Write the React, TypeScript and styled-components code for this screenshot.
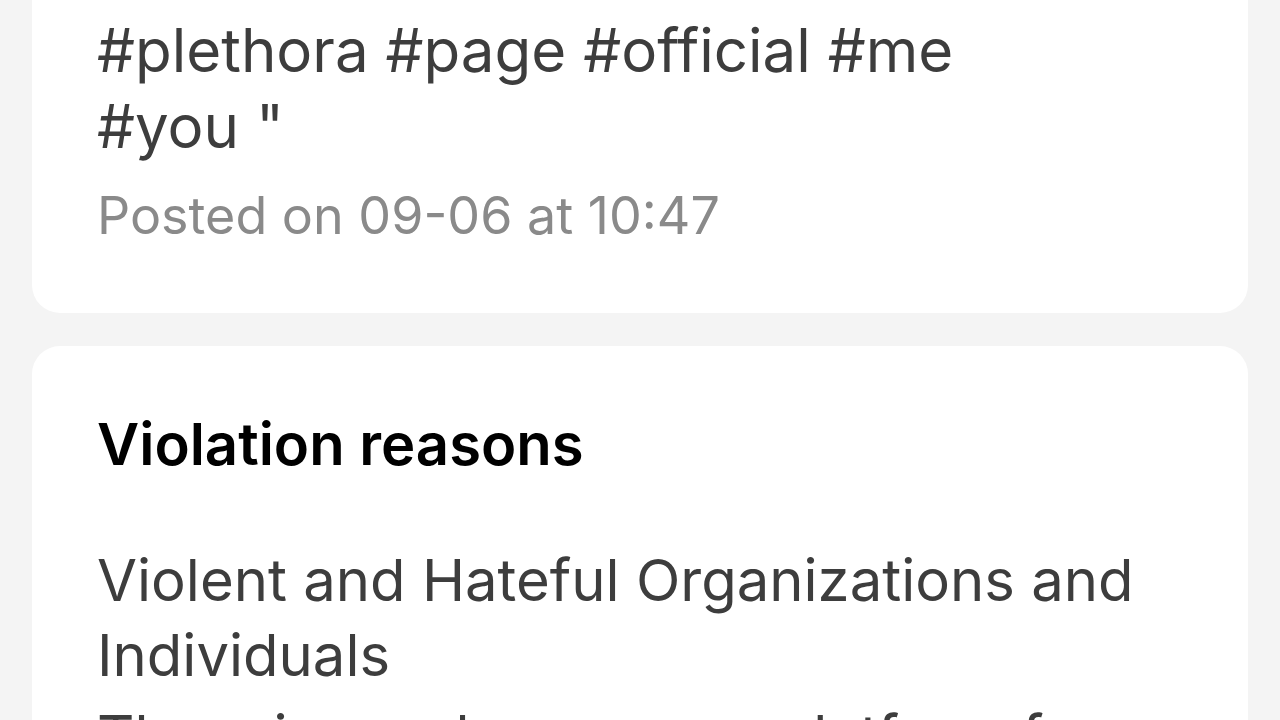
import React from 'react';
import styled, { createGlobalStyle } from 'styled-components';

const GlobalStyle = createGlobalStyle`
  html, body {
    margin: 0;
    padding: 0;
    background: #f4f4f4;
    font-family: Inter, Roboto, 'Liberation Sans', sans-serif;
    overflow: hidden;
  }
`;

const Page = styled.div`
  height: 720px;
  overflow: hidden;
  padding: 0 32px;
`;

// the view is scrolled, so the first card starts above the top edge
const Stack = styled.div`
  display: flex;
  flex-direction: column;
  gap: 33px;
  margin-top: -28px;
`;

const Card = styled.section<{ $top: number; $bottom: number }>`
  background: #fff;
  border-radius: 28px;
  padding: ${(p) => p.$top}px 65px ${(p) => p.$bottom}px;
`;

const Caption = styled.div`
  font-size: 60px;
  line-height: 76px;
  color: #3d3d3d;
`;

const Meta = styled.div`
  margin-top: 22px;
  font-size: 52px;
  line-height: 60px;
  color: #8a8a8a;
`;

const Heading = styled.div`
  font-size: 58px;
  line-height: 64px;
  font-weight: 600;
  color: #000;
`;

const Reason = styled.div`
  margin-top: 67px;
  font-size: 58px;
  line-height: 75px;
  color: #3d3d3d;
`;

const Body = styled.div`
  margin-top: 6px;
  font-size: 58px;
  line-height: 75px;
  color: #3d3d3d;
`;

export default function App() {
  return (
    <>
      <GlobalStyle />
      <Page>
        <Stack>
          <Card $top={40} $bottom={67}>
            <Caption>
              #plethora #page #official #me
              <br />
              #you "
            </Caption>
            <Meta>Posted on 09-06 at 10:47</Meta>
          </Card>
          <Card $top={66} $bottom={40}>
            <Heading>Violation reasons</Heading>
            <Reason>
              Violent and Hateful Organizations and
              <br />
              Individuals
            </Reason>
            <Body>There is no place on our platform for</Body>
          </Card>
        </Stack>
      </Page>
    </>
  );
}
